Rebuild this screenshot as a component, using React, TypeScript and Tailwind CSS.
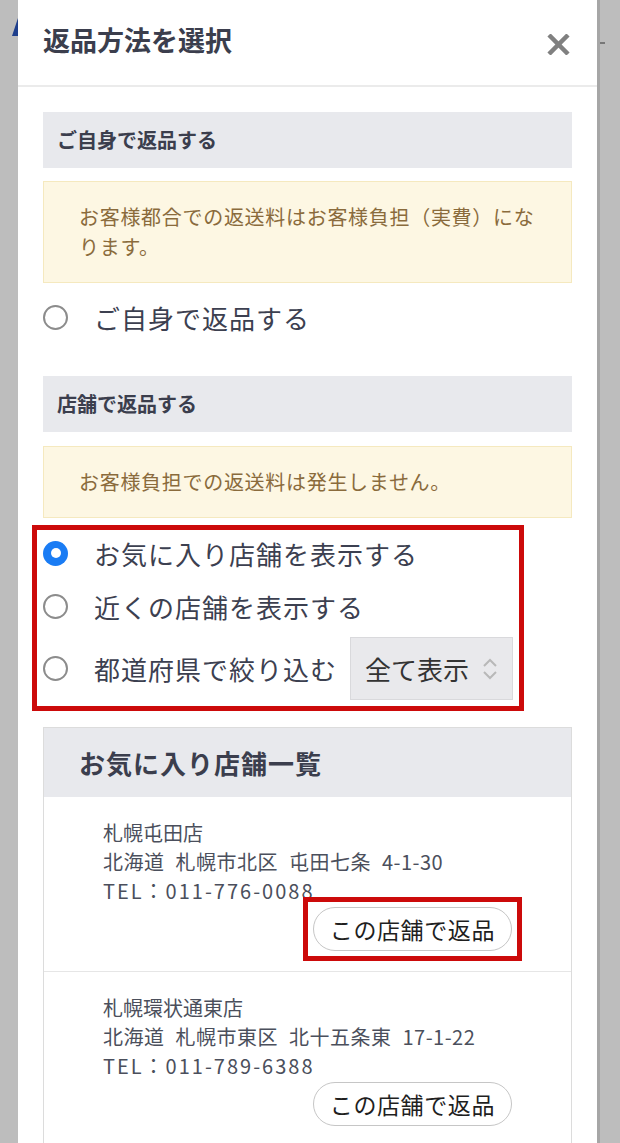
import { useState } from "react"

const stores = [
  {
    name: "札幌屯田店",
    address: "北海道 札幌市北区 屯田七条 4-1-30",
    tel: "TEL：011-776-0088",
    marked: true,
  },
  {
    name: "札幌環状通東店",
    address: "北海道 札幌市東区 北十五条東 17-1-22",
    tel: "TEL：011-789-6388",
    marked: false,
  },
]

function Radio({ checked }: { checked: boolean }) {
  if (checked) {
    return (
      <span className="flex h-[25px] w-[25px] shrink-0 items-center justify-center rounded-full bg-[#1a7cf4]">
        <span className="h-[10px] w-[10px] rounded-full bg-white" />
      </span>
    )
  }
  return <span className="h-[25px] w-[25px] shrink-0 rounded-full border-2 border-[#8c8c8c] bg-white" />
}

export default function App() {
  const [mode, setMode] = useState<"self" | "fav" | "near" | "pref">("fav")

  return (
    <div className="flex h-[1143px] w-[620px] overflow-hidden bg-[#bdbdbd] font-['Noto_Sans_CJK_JP',sans-serif]">
      {/* 背景のロゴの端 */}
      <div className="w-[18px] shrink-0">
        <svg className="ml-[12px] mt-[18px]" width="6" height="18" viewBox="0 0 6 18">
          <polygon points="0,18 6,0 6,18" fill="#1f3f8c" />
        </svg>
      </div>

      {/* モーダル */}
      <div className="w-[579px] shrink-0 bg-white">
        <div className="flex h-[87px] items-center justify-between border-b-2 border-[#ebebeb] pb-[6px] pl-[25px] pr-[27px]">
          <h1 className="text-[27px] font-bold leading-none text-[#3b3e4d]">返品方法を選択</h1>
          <button className="mt-[10px]">
            <svg width="23" height="21" viewBox="0 0 23 21">
              <path d="M2 1 L21 20 M21 1 L2 20" stroke="#808080" strokeWidth="4.5" />
            </svg>
          </button>
        </div>

        <div className="px-[25px] pt-[25px]">
          {/* ご自身で返品 */}
          <div className="flex h-[56px] items-center bg-[#e8e9ed] pl-[14px] text-[20px] font-bold text-[#3b3e4d]">
            ご自身で返品する
          </div>
          <div className="mt-[13px] border border-[#f5e9bf] bg-[#fdf7e3] px-[35px] py-[20px] text-[20px] leading-[30px] tracking-[0.7px] text-[#8a6b3c]">
            お客様都合での返送料はお客様負担（実費）になります。
          </div>
          <label className="mt-[12px] flex h-[44px] items-center gap-[26px]" onClick={() => setMode("self")}>
            <Radio checked={mode === "self"} />
            <span className="text-[26px] tracking-[1px] text-[#3c4050]">ご自身で返品する</span>
          </label>

          {/* 店舗で返品 */}
          <div className="mt-[37px] flex h-[56px] items-center bg-[#e8e9ed] pl-[14px] text-[20px] font-bold text-[#3b3e4d]">
            店舗で返品する
          </div>
          <div className="mt-[14px] border border-[#f5e9bf] bg-[#fdf7e3] px-[35px] py-[20px] text-[20px] leading-[30px] tracking-[0.7px] text-[#8a6b3c]">
            お客様負担での返送料は発生しません。
          </div>

          <div className="relative mt-[18px] w-[470px]">
            <label className="flex h-[34px] items-center gap-[26px]" onClick={() => setMode("fav")}>
              <Radio checked={mode === "fav"} />
              <span className="text-[26px] tracking-[1px] text-[#3c4050]">お気に入り店舗を表示する</span>
            </label>
            <label className="mt-[19px] flex h-[34px] items-center gap-[26px]" onClick={() => setMode("near")}>
              <Radio checked={mode === "near"} />
              <span className="text-[26px] tracking-[1px] text-[#3c4050]">近くの店舗を表示する</span>
            </label>
            <div className="mt-[14px] flex h-[63px] items-center">
              <label className="flex items-center gap-[26px]" onClick={() => setMode("pref")}>
                <Radio checked={mode === "pref"} />
                <span className="text-[26px] tracking-[1px] text-[#3c4050]">都道府県で絞り込む</span>
              </label>
              <div className="ml-[13px] flex h-[63px] w-[163px] items-center justify-between border border-[#d9d9dc] bg-[#e9e9ec] pl-[14px] pr-[13px]">
                <span className="text-[26px] text-[#333333]">全て表示</span>
                <svg width="18" height="22" viewBox="0 0 18 22">
                  <path d="M3 8 L9 2 L15 8 M3 14 L9 20 L15 14" fill="none" stroke="#b8b8b8" strokeWidth="2" />
                </svg>
              </div>
            </div>
            <div className="pointer-events-none absolute -inset-[11px] border-[5px] border-[#cc0a0a]" />
          </div>

          {/* お気に入り店舗一覧 */}
          <div className="mt-[27px] border border-[#dcdcdc]">
            <div className="flex h-[69px] items-center bg-[#e8e9ed] pl-[35px] text-[26px] font-bold tracking-[1px] text-[#3b3e4d]">
              お気に入り店舗一覧
            </div>
            {stores.map((s) => (
              <div key={s.name} className="border-b border-[#e6e6e6] px-[59px] pb-[20px] pt-[21px]">
                <div className="text-[20px] leading-[29px] text-[#4b4f5c]">
                  <p>{s.name}</p>
                  <p className="tracking-[0.5px] [word-spacing:6px]">{s.address}</p>
                  <p className="tracking-[2px]">{s.tel}</p>
                </div>
                <div className="mt-[2px] flex justify-end">
                  <div className="relative">
                    <button className="h-[44px] rounded-full border border-[#c6c6c6] bg-white px-[16px] text-[23px] tracking-[0.6px] text-[#1f1f1f]">
                      この店舗で返品
                    </button>
                    {s.marked && (
                      <div className="pointer-events-none absolute -inset-[10px] border-[5px] border-[#cc0a0a]" />
                    )}
                  </div>
                </div>
              </div>
            ))}
          </div>
        </div>
      </div>

      {/* 右側の背景 */}
      <div className="flex-1 border-l-[3px] border-[#a6a6a6]">
        <div className="mt-[42px] h-[2px] w-[5px] bg-[#777777]" />
      </div>
    </div>
  )
}
